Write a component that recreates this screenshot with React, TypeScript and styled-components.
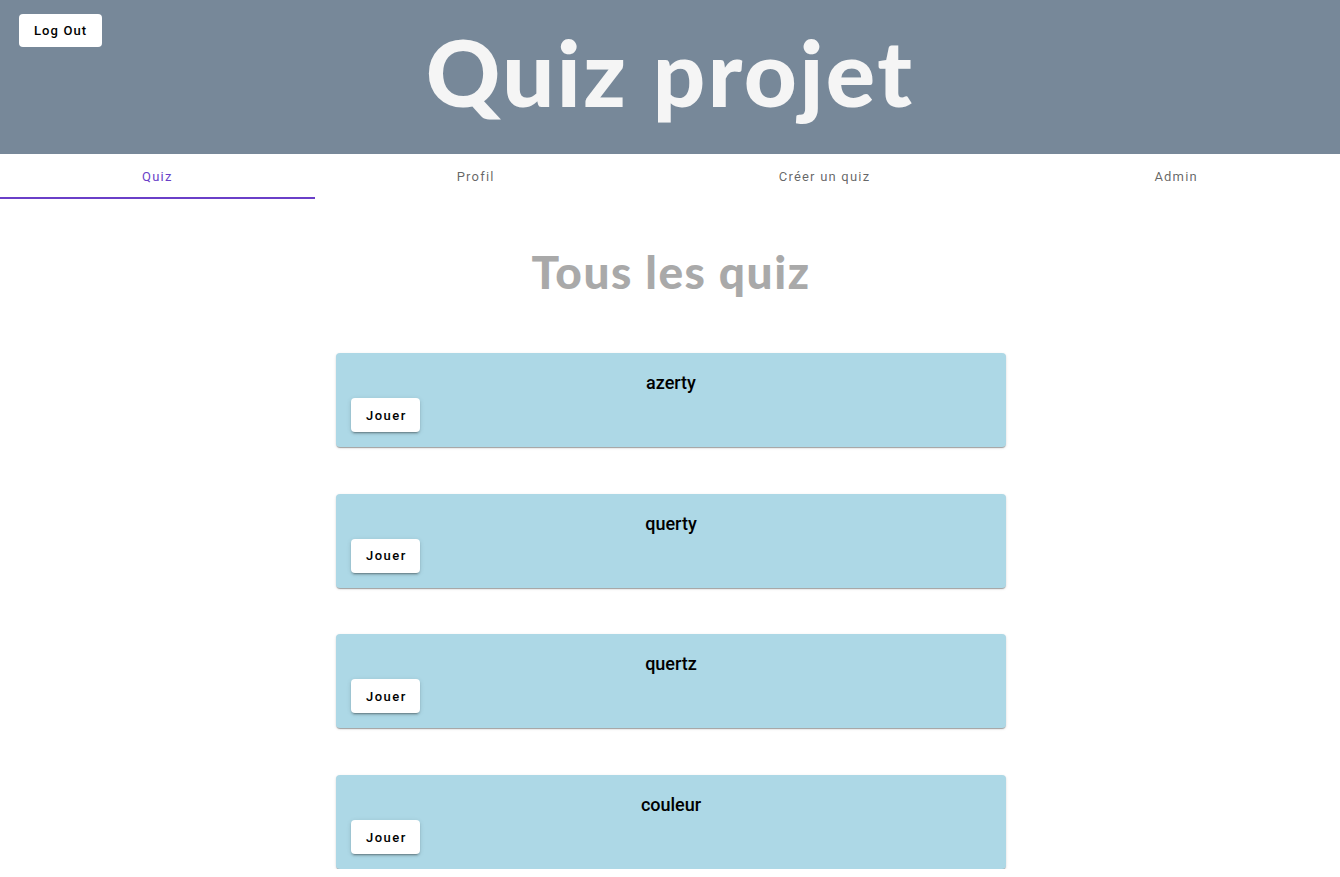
import React, { useState } from "react";
import styled, { createGlobalStyle } from "styled-components";

const Global = createGlobalStyle`
  html, body { margin: 0; padding: 0; background: #ffffff; }
  body { font-family: Roboto, "Noto Sans", sans-serif; }
  * { box-sizing: border-box; }
`;

const Header = styled.header`
  height: 154px;
  background: #778899;
  display: grid;
  grid-template-columns: 1fr auto 1fr;
  align-items: start;
`;

const HeaderLeft = styled.div`
  padding: 14px 0 0 19px;
`;

const Title = styled.h1`
  margin: 0;
  padding-top: 17px;
  font-family: Lato, sans-serif;
  font-weight: 900;
  font-size: 92px;
  line-height: 110px;
  color: #f5f5f5;
  letter-spacing: 2.5px;
`;

const WhiteButton = styled.button<{ $small?: boolean }>`
  border: none;
  background: #ffffff;
  border-radius: 4px;
  font-family: Roboto, sans-serif;
  font-weight: 500;
  color: #000;
  cursor: pointer;
  font-size: 13px;
  letter-spacing: ${(p) => (p.$small ? "1.5px" : "1.1px")};
  height: ${(p) => (p.$small ? "34px" : "33px")};
  padding: ${(p) => (p.$small ? "0 13px 0 15px" : "0 15px")};
  box-shadow: ${(p) =>
    p.$small
      ? "0px 3px 1px -2px rgba(0,0,0,0.2), 0px 2px 2px 0px rgba(0,0,0,0.14), 0px 1px 5px 0px rgba(0,0,0,0.12)"
      : "none"};
`;

const Tabs = styled.nav`
  display: flex;
  height: 45px;
`;

const Tab = styled.button<{ $active?: boolean }>`
  flex: 1 1 auto;
  border: none;
  background: transparent;
  font-family: Roboto, sans-serif;
  font-weight: 400;
  font-size: 13px;
  letter-spacing: 1.2px;
  color: ${(p) => (p.$active ? "#6a3fc8" : "rgba(0,0,0,0.62)")};
  border-bottom: 2px solid ${(p) => (p.$active ? "#6a3fc8" : "transparent")};
  padding: 1px 16px 0;
  cursor: pointer;
`;

const Main = styled.main`
  display: flex;
  flex-direction: column;
  align-items: center;
  padding-left: 2px;
`;

const Heading = styled.h2`
  margin: 0;
  padding: 43px 0 52px;
  font-family: Lato, sans-serif;
  font-weight: 900;
  font-size: 46px;
  line-height: 59px;
  letter-spacing: 1.5px;
  color: #a9a9a9;
`;

const List = styled.div`
  width: 670px;
  display: flex;
  flex-direction: column;
  gap: 46.7px;
`;

const Card = styled.article`
  background: #add8e6;
  border-radius: 4px;
  padding: 15px;
  height: 94px;
  box-shadow: 0px 2px 1px -1px rgba(0,0,0,0.2), 0px 1px 1px 0px rgba(0,0,0,0.14), 0px 1px 3px 0px rgba(0,0,0,0.12);
  display: flex;
  flex-direction: column;
  align-items: flex-start;
`;

const CardTitle = styled.h3`
  margin: 0;
  width: 100%;
  text-align: center;
  font-family: Roboto, sans-serif;
  font-weight: 500;
  font-size: 18px;
  line-height: 30px;
  color: #000;
`;

const quizzes = ["azerty", "querty", "quertz", "couleur"];
const tabs = ["Quiz", "Profil", "Créer un quiz", "Admin"];

export default function App() {
  const [active, setActive] = useState(0);
  return (
    <>
      <Global />
      <Header>
        <HeaderLeft>
          <WhiteButton>Log Out</WhiteButton>
        </HeaderLeft>
        <Title>Quiz projet</Title>
        <div />
      </Header>
      <Tabs>
        {tabs.map((t, i) => (
          <Tab key={t} $active={i === active} onClick={() => setActive(i)}>
            {t}
          </Tab>
        ))}
      </Tabs>
      <Main>
        <Heading>Tous les quiz</Heading>
        <List>
          {quizzes.map((q) => (
            <Card key={q}>
              <CardTitle>{q}</CardTitle>
              <WhiteButton $small>Jouer</WhiteButton>
            </Card>
          ))}
        </List>
      </Main>
    </>
  );
}
